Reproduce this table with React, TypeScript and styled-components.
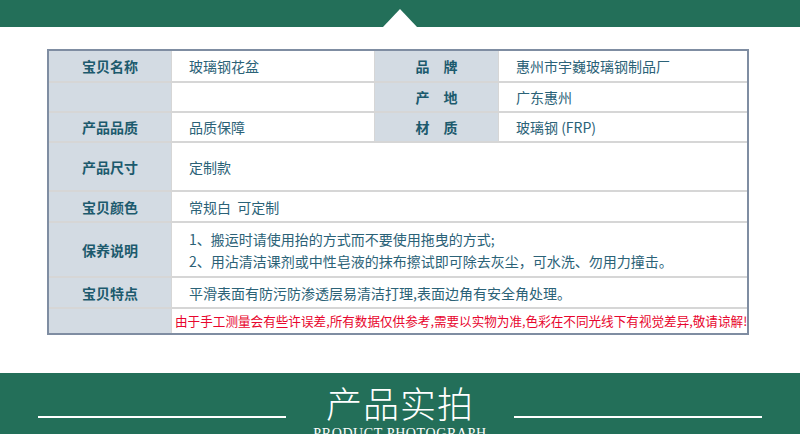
import React from "react";
import styled, { createGlobalStyle } from "styled-components";

const GlobalStyle = createGlobalStyle`
  html, body { margin: 0; padding: 0; background: #ffffff; }
  body { font-family: "Noto Sans CJK SC", "Noto Sans", sans-serif; overflow: hidden; }
`;

const GREEN = "#236f59";

const Page = styled.div`
  width: 800px;
  height: 434px;
  overflow: hidden;
  display: flex;
  flex-direction: column;
  background: #fff;
`;

const TopBand = styled.div`
  position: relative;
  flex: none;
  height: 27px;
  background: ${GREEN};
  display: flex;
  justify-content: center;
  overflow: hidden;
`;

const TopCut = styled.div`
  margin-top: -12px;
  font-family: "Liberation Serif", serif;
  font-size: 14px;
  line-height: 14px;
  letter-spacing: 1px;
  color: #c9d6d1;
`;

const Notch = styled.div`
  position: absolute;
  left: 383px;
  bottom: 0;
  width: 0;
  height: 0;
  border-left: 17px solid transparent;
  border-right: 17px solid transparent;
  border-bottom: 18px solid #fff;
`;

const Table = styled.div`
  flex: none;
  margin: 22px 0 0 47px;
  width: 702px;
  box-sizing: border-box;
  border: 2px solid #7f8da2;
  background: #d6d6d6;
  display: grid;
  grid-template-columns: 122px 202px 123px 1fr;
  grid-template-rows: 30px 28px 28px 47px 29px 53px 29px 24px;
  column-gap: 1px;
  row-gap: 2px;
`;

const Label = styled.div`
  background: #d3dbe3;
  display: flex;
  align-items: center;
  justify-content: center;
  font-size: 14px;
  font-weight: 700;
  color: #1c5a6d;
  white-space: pre;
`;

const Value = styled.div<{ $span?: number; $tight?: boolean }>`
  background: #fff;
  grid-column: span ${(p) => p.$span ?? 1};
  display: flex;
  flex-direction: column;
  justify-content: center;
  padding-left: ${(p) => (p.$tight ? "3px" : "17px")};
  font-size: 14px;
  line-height: 22px;
  color: #2b6277;
  white-space: pre;
`;

const Note = styled.span`
  font-size: 12.6px;
  line-height: 20px;
  color: #e8062e;
`;

const Spacer = styled.div`
  height: 38px;
  flex: none;
`;

const BottomBand = styled.div`
  flex: none;
  height: 90px;
  background: ${GREEN};
  display: flex;
  flex-direction: column;
  align-items: center;
`;

const HeadRow = styled.div`
  width: 724px;
  padding-top: 11px;
  display: flex;
  align-items: flex-end;
  justify-content: space-between;
`;

const Line = styled.div`
  width: 248px;
  height: 2px;
  background: #ffffff;
  margin-bottom: 2px;
`;

const Title = styled.div`
  font-size: 36px;
  line-height: 36px;
  color: #ffffff;
  font-weight: 300;
  letter-spacing: 1px;
`;

const SubTitle = styled.div`
  margin-top: 7px;
  font-family: "Liberation Serif", serif;
  font-size: 14px;
  line-height: 14px;
  letter-spacing: 0.6px;
  color: #ffffff;
`;

export default function App() {
  return (
    <Page>
      <GlobalStyle />
      <TopBand>
        <TopCut>PRODUCT PARAMETER</TopCut>
        <Notch />
      </TopBand>
      <Table>
        <Label>宝贝名称</Label>
        <Value>玻璃钢花盆</Value>
        <Label>品　牌</Label>
        <Value>惠州市宇巍玻璃钢制品厂</Value>

        <Label />
        <Value />
        <Label>产　地</Label>
        <Value>广东惠州</Value>

        <Label>产品品质</Label>
        <Value>品质保障</Value>
        <Label>材　质</Label>
        <Value>玻璃钢 (FRP)</Value>

        <Label>产品尺寸</Label>
        <Value $span={3}>定制款</Value>

        <Label>宝贝颜色</Label>
        <Value $span={3}>常规白  可定制</Value>

        <Label>保养说明</Label>
        <Value $span={3}>
          <span>1、搬运时请使用抬的方式而不要使用拖曳的方式;</span>
          <span>2、用沾清洁课剂或中性皂液的抹布擦试即可除去灰尘，可水洗、勿用力撞击。</span>
        </Value>

        <Label>宝贝特点</Label>
        <Value $span={3}>平滑表面有防污防渗透层易清洁打理,表面边角有安全角处理。</Value>

        <Label />
        <Value $span={3} $tight>
          <Note>由于手工测量会有些许误差,所有数据仅供参考,需要以实物为准,色彩在不同光线下有视觉差异,敬请谅解!</Note>
        </Value>
      </Table>
      <Spacer />
      <BottomBand>
        <HeadRow>
          <Line />
          <Title>产品实拍</Title>
          <Line />
        </HeadRow>
        <SubTitle>PRODUCT PHOTOGRAPH</SubTitle>
      </BottomBand>
    </Page>
  );
}
